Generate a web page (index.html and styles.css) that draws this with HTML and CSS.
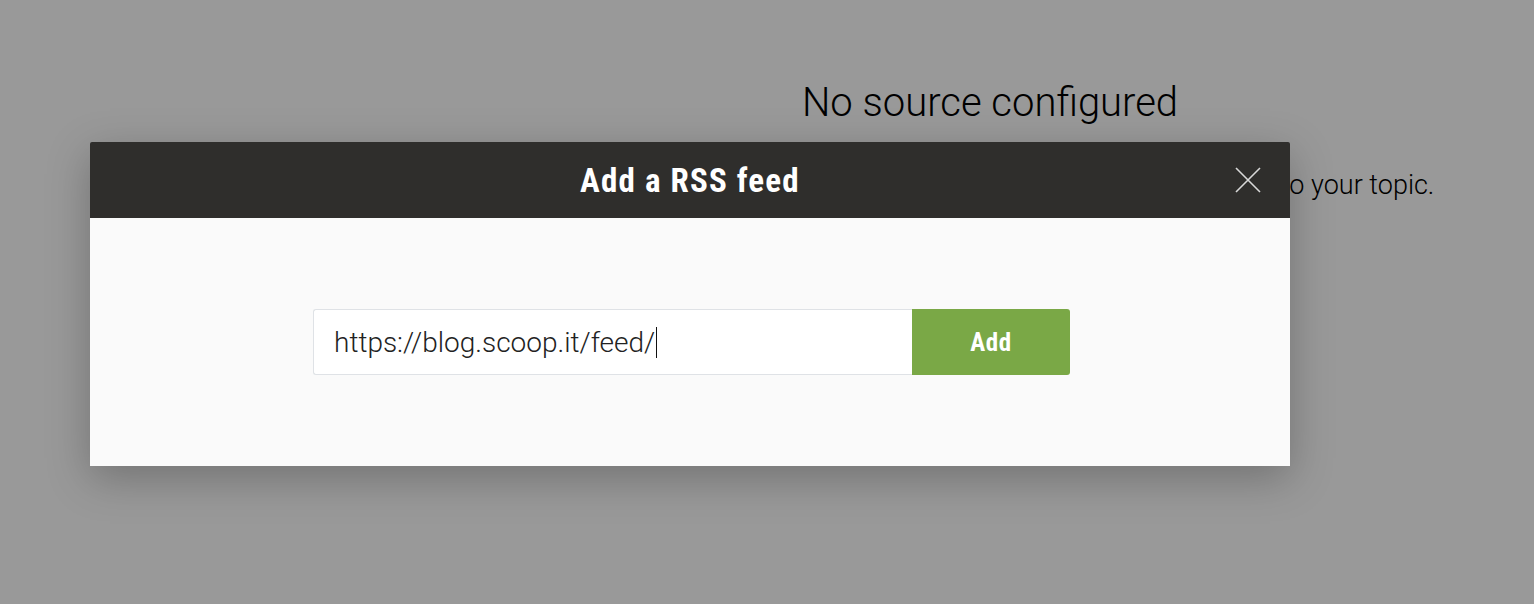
FILE: index.html
```html
<!DOCTYPE html>
<html lang="en">
<head>
    <meta charset="UTF-8">
    <title>Sources</title>
    <link rel="stylesheet" href="styles.css">
</head>
<body>
    <div class="page">
        <div class="main">
            <h1>No source configured</h1>
            <p>Use the left panel to add RSS feeds, Twitter users or keywords to your topic.</p>
        </div>
    </div>

    <div class="modal">
        <div class="modal-head">
            <h2>Add a RSS feed</h2>
            <button class="close" type="button" aria-label="Close">
                <svg width="26" height="26" viewBox="0 0 26 26">
                    <path d="M1 1 L25 25 M25 1 L1 25" stroke="#d8d8d8" stroke-width="1.6" fill="none"/>
                </svg>
            </button>
        </div>
        <div class="modal-body">
            <form class="feed-form">
                <div class="feed-input">https://blog.scoop.it/feed/<span class="caret"></span></div>
                <button class="add-btn" type="button">Add</button>
            </form>
        </div>
    </div>
</body>
</html>
```

FILE: styles.css
```css
body {
    margin: 0;
    background-color: #999999;
    font-family: Roboto, "Liberation Sans", sans-serif;
    height: 604px;
    overflow: hidden;
}
.page {
    display: flex;
}
.main {
    margin-left: 446px;
    width: 1088px;
    text-align: center;
    padding-top: 77px;
}
h1 {
    margin: 0;
    font-size: 40px;
    font-weight: 300;
    color: #000;
    line-height: 52px;
}
.main p {
    margin: 40px 0 0;
    font-size: 27px;
    font-weight: 300;
    color: #000;
    white-space: nowrap;
}

/* modal */
.modal {
    position: absolute;
    left: 90px;
    top: 142px;
    width: 1200px;
    box-shadow: 0 12px 40px rgba(0, 0, 0, 0.25);
}
.modal-head {
    background-color: #2f2e2c;
    height: 76px;
    display: flex;
    align-items: center;
    justify-content: center;
    position: relative;
    border-radius: 2px 2px 0 0;
}
.modal-head h2 {
    margin: 0;
    color: #fff;
    font-family: "Roboto Condensed", "Liberation Sans Narrow", Roboto, sans-serif;
    font-weight: 700;
    font-size: 33px;
    letter-spacing: 1.2px;
}
.close {
    position: absolute;
    right: 29px;
    top: 25px;
    background: none;
    border: 0;
    padding: 0;
    width: 26px;
    height: 26px;
}
.modal-body {
    background-color: #fafafa;
    height: 248px;
    display: flex;
    align-items: center;
    justify-content: center;
}
.feed-form {
    display: flex;
    margin-left: 3px;
}
.feed-input {
    width: 578px;
    height: 64px;
    border: 1px solid #dfe2e6;
    border-right: 0;
    border-radius: 3px 0 0 3px;
    background: #fff;
    padding-left: 20px;
    display: flex;
    align-items: center;
    font-size: 28px;
    font-weight: 300;
    color: #222;
}
.caret {
    display: inline-block;
    width: 1px;
    height: 31px;
    background: #111;
    margin-left: 1px;
}
.add-btn {
    width: 158px;
    height: 66px;
    border: 0;
    border-radius: 0 3px 3px 0;
    background-color: #7aa846;
    color: #fff;
    font-family: "Roboto Condensed", "Liberation Sans Narrow", Roboto, sans-serif;
    font-weight: 700;
    font-size: 25px;
    letter-spacing: 0.6px;
}
```
